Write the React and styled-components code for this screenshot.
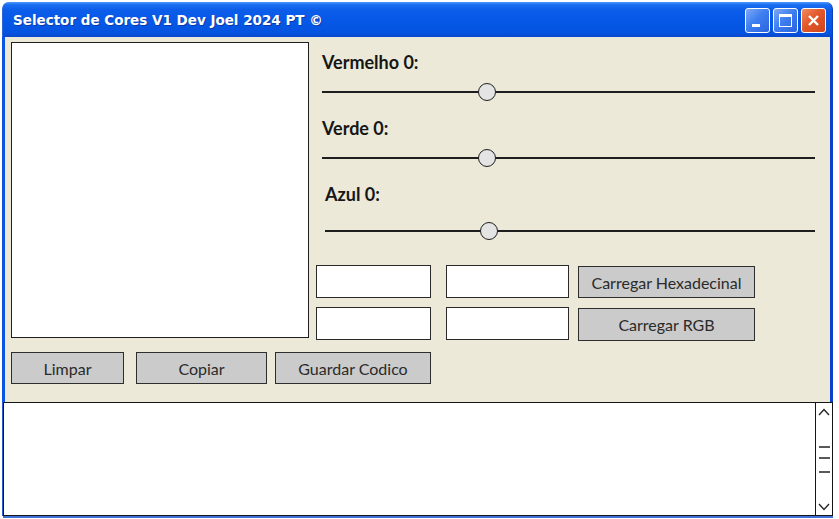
import React from "react";
import styled, { createGlobalStyle } from "styled-components";

const Global = createGlobalStyle`
  html, body { margin: 0; padding: 0; background: #ffffff; }
  body { font-family: "Lato", "DejaVu Sans", sans-serif; }
  * { box-sizing: border-box; }
`;

const Page = styled.div`
  padding: 2px 0 0 2px;
  width: 839px;
  height: 519px;
`;

const Window = styled.div`
  width: 831px;
  display: flex;
  flex-direction: column;
`;

const TitleBar = styled.div`
  height: 35px;
  border-radius: 7px 7px 0 0;
  background: linear-gradient(
    to bottom,
    #4a9af8 0%,
    #1a6cf0 8%,
    #0a5ce9 25%,
    #0657e6 60%,
    #0553e0 88%,
    #0a48cc 100%
  );
  display: flex;
  align-items: center;
  padding: 0 6px 0 10px;
  border-left: 1px solid #2a66d8;
  border-right: 1px solid #0a3fb8;
`;

const Title = styled.div`
  flex: 1;
  color: #ffffff;
  font-family: "DejaVu Sans", Verdana, sans-serif;
  font-weight: bold;
  font-size: 13.5px;
  text-shadow: 1px 1px 0 #0b3aa8;
  margin-top: 1px;
`;

const Controls = styled.div`
  display: flex;
  gap: 3px;
  margin-top: 1px;
`;

const CtrlButton = styled.div`
  width: 25px;
  height: 25px;
  border-radius: 3px;
  border: 1px solid #ffffff;
  background: ${(p) =>
    p.$close
      ? "linear-gradient(135deg, #f08a62 0%, #e2582a 45%, #d0441a 100%)"
      : "linear-gradient(135deg, #7fa9f6 0%, #3f7ff0 45%, #2a63de 100%)"};
  display: flex;
  align-items: center;
  justify-content: center;
  position: relative;
`;

const MinBar = styled.div`
  position: absolute;
  left: 6px;
  bottom: 5px;
  width: 8px;
  height: 3px;
  background: #ffffff;
`;

const MaxBox = styled.div`
  width: 13px;
  height: 13px;
  border: 1px solid #ffffff;
  border-top-width: 3px;
`;

const Body = styled.div`
  height: 365px;
  background: #ece9d8;
  border-left: 3px solid #0b56e2;
  border-right: 3px solid #0843cc;
  padding: 5px 0 0 6px;
  display: flex;
  flex-direction: column;
`;

const TopRow = styled.div`
  display: flex;
  align-items: flex-start;
  gap: 7px;
`;

const Preview = styled.div`
  width: 298px;
  height: 296px;
  background: #ffffff;
  border: 1.5px solid #1e1e1e;
`;

const RightPanel = styled.div`
  flex: 1;
  display: flex;
  flex-direction: column;
  padding-top: 10px;
`;

const Label = styled.div`
  font-weight: 700;
  font-size: 18px;
  line-height: 20px;
  color: #161616;
  margin-left: ${(p) => p.$indent}px;
  margin-top: ${(p) => p.$top}px;
`;

const Track = styled.div`
  position: relative;
  height: 18px;
  margin-left: ${(p) => p.$indent}px;
  margin-top: ${(p) => p.$top}px;
  width: ${(p) => 493 - (p.$indent - 6)}px;
  &::before {
    content: "";
    position: absolute;
    left: 0;
    right: 0;
    top: 8px;
    height: 1.5px;
    background: #1e1e1e;
  }
`;

const Thumb = styled.div`
  position: absolute;
  top: 0;
  width: 18px;
  height: 18px;
  border-radius: 50%;
  background: #e4e4e4;
  border: 1.5px solid #1e1e1e;
`;

const FieldRow = styled.div`
  display: flex;
  align-items: flex-start;
  margin-top: ${(p) => p.$top}px;
`;

const Field = styled.div`
  width: ${(p) => p.$w}px;
  height: 33px;
  margin-left: ${(p) => p.$ml || 0}px;
  background: #ffffff;
  border: 1.5px solid #2a2a2a;
`;

const Button = styled.div`
  height: ${(p) => p.$h || 32}px;
  width: ${(p) => p.$w}px;
  margin-left: ${(p) => p.$ml || 0}px;
  margin-top: ${(p) => p.$mt || 0}px;
  background: #cbcbcb;
  border: 1.5px solid #2e2e2e;
  display: flex;
  align-items: center;
  justify-content: center;
  font-family: "Lato", sans-serif;
  font-size: 16px;
  color: #2a2a2a;
`;

const ButtonRow = styled.div`
  display: flex;
  margin-top: 11px;
`;

const LogArea = styled.div`
  margin-left: 1px;
  height: 114px;
  background: #ffffff;
  border: 1.5px solid #151515;
  box-shadow: 0 2px 0 #3f6fd8, -1px 0 0 #2a5bd0;
  display: flex;
  justify-content: flex-end;
`;

const ScrollBar = styled.div`
  width: 17px;
  border-left: 1.5px solid #151515;
  display: flex;
  flex-direction: column;
  align-items: center;
  justify-content: space-between;
  padding: 5px 0 4px;
`;

const Chevron = ({ down }) => (
  <svg width="12" height="8" viewBox="0 0 12 8">
    <path
      d={down ? "M1 1 L6 6.5 L11 1" : "M1 7 L6 1.5 L11 7"}
      fill="none"
      stroke="#222"
      strokeWidth="1.3"
    />
  </svg>
);

const Grip = () => (
  <svg width="13" height="28" viewBox="0 0 13 28">
    <path d="M1 1 H12 M1 12 H12 M1 26 H12" stroke="#222" strokeWidth="1.3" />
  </svg>
);

const sliders = [
  { label: "Vermelho 0:", indent: 6, ltop: 0, ttop: 11, thumb: 156 },
  { label: "Verde 0:", indent: 6, ltop: 17, ttop: 11, thumb: 156 },
  { label: "Azul 0:", indent: 9, ltop: 17, ttop: 18, thumb: 155 },
];

export default function App() {
  return (
    <Page>
      <Global />
      <Window>
        <TitleBar>
          <Title>Selector de Cores V1 Dev Joel 2024 PT ©</Title>
          <Controls>
            <CtrlButton>
              <MinBar />
            </CtrlButton>
            <CtrlButton>
              <MaxBox />
            </CtrlButton>
            <CtrlButton $close>
              <svg width="13" height="13" viewBox="0 0 13 13">
                <path d="M2 2 L11 11 M11 2 L2 11" stroke="#fff" strokeWidth="2.4" />
              </svg>
            </CtrlButton>
          </Controls>
        </TitleBar>
        <Body>
          <TopRow>
            <Preview />
            <RightPanel>
              {sliders.map((s) => (
                <React.Fragment key={s.label}>
                  <Label $indent={s.indent} $top={s.ltop}>
                    {s.label}
                  </Label>
                  <Track $indent={s.indent} $top={s.ttop}>
                    <Thumb style={{ left: s.thumb }} />
                  </Track>
                </React.Fragment>
              ))}
              <FieldRow $top={25}>
                <Field $w={115} />
                <Field $w={123} $ml={15} />
                <Button $w={177} $ml={9} $h={32} $mt={1}>
                  Carregar Hexadecinal
                </Button>
              </FieldRow>
              <FieldRow $top={9}>
                <Field $w={115} />
                <Field $w={123} $ml={15} />
                <Button $w={177} $ml={9} $h={33} $mt={1}>
                  Carregar RGB
                </Button>
              </FieldRow>
            </RightPanel>
          </TopRow>
          <ButtonRow>
            <Button $w={113}>Limpar</Button>
            <Button $w={131} $ml={12}>
              Copiar
            </Button>
            <Button $w={156} $ml={8}>
              Guardar Codico
            </Button>
          </ButtonRow>
        </Body>
        <LogArea>
          <ScrollBar>
            <Chevron />
            <Grip />
            <Chevron down />
          </ScrollBar>
        </LogArea>
      </Window>
    </Page>
  );
}
